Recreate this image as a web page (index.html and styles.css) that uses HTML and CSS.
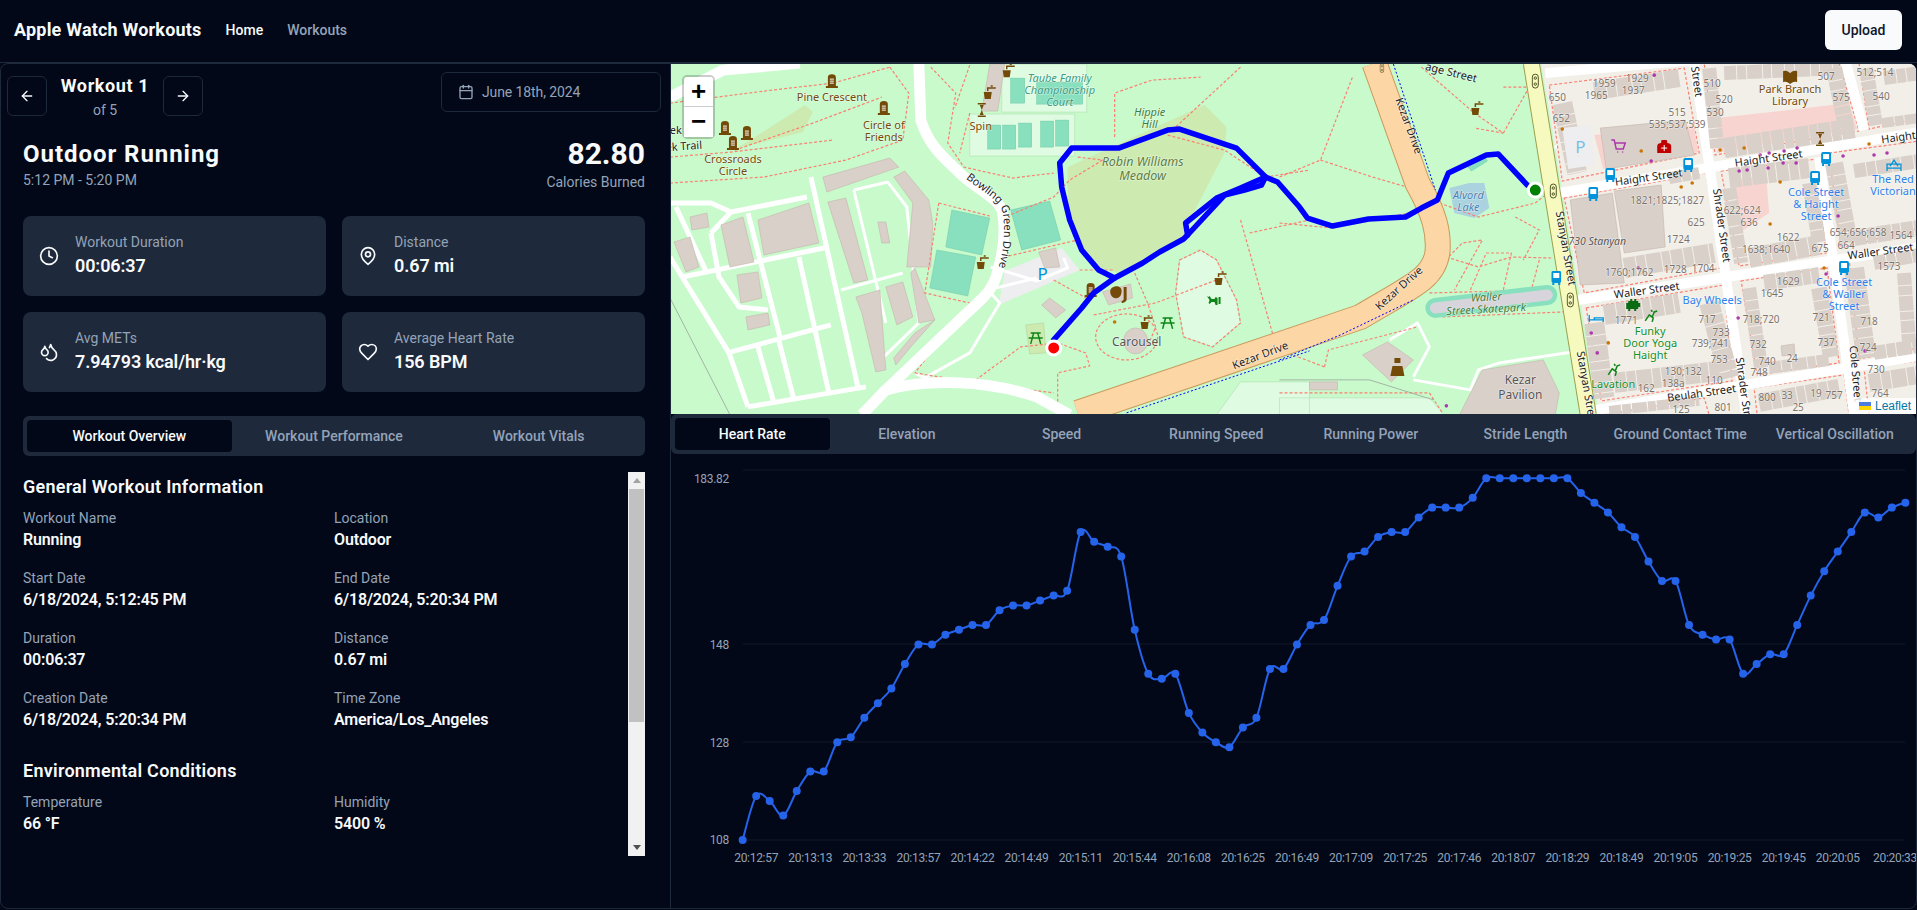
FILE: index.html
```html
<!DOCTYPE html>
<html lang="en">
<head>
    <meta charset="UTF-8">
    <title>Apple Watch Workouts</title>
    <link rel="stylesheet" href="styles.css">
</head>
<body>
    <header class="topbar">
        <div class="brand">Apple Watch Workouts</div>
        <nav class="topnav">
            <a class="active">Home</a>
            <a>Workouts</a>
        </nav>
        <button class="upload">Upload</button>
    </header>

    <div class="panels">
        <section class="left">
            <div class="pager-row">
                <div class="pager">
                    <button class="icon-btn"><svg class="ico" viewBox="0 0 24 24"><path d="m12 19-7-7 7-7"/><path d="M19 12H5"/></svg></button>
                    <div class="pager-title">
                        <div class="pager-name">Workout 1</div>
                        <div class="pager-of">of 5</div>
                    </div>
                    <button class="icon-btn"><svg class="ico" viewBox="0 0 24 24"><path d="M5 12h14"/><path d="m12 5 7 7-7 7"/></svg></button>
                </div>
                <button class="date-btn"><svg class="ico cal" viewBox="0 0 24 24"><rect x="3" y="4" width="18" height="18" rx="2"/><path d="M16 2v4"/><path d="M8 2v4"/><path d="M3 10h18"/></svg>June 18th, 2024</button>
            </div>

            <div class="summary">
                <div>
                    <h1>Outdoor Running</h1>
                    <div class="muted">5:12 PM - 5:20 PM</div>
                </div>
                <div class="calories">
                    <div class="cal-num">82.80</div>
                    <div class="muted">Calories Burned</div>
                </div>
            </div>

            <div class="cards">
                <div class="card">
                    <svg class="ico card-ico" viewBox="0 0 24 24"><circle cx="12" cy="12" r="10"/><polyline points="12 6 12 12 16 14"/></svg>
                    <div><div class="muted">Workout Duration</div><div class="card-val">00:06:37</div></div>
                </div>
                <div class="card">
                    <svg class="ico card-ico" viewBox="0 0 24 24"><path d="M20 10c0 6-8 12-8 12s-8-6-8-12a8 8 0 0 1 16 0Z"/><circle cx="12" cy="10" r="3"/></svg>
                    <div><div class="muted">Distance</div><div class="card-val">0.67 mi</div></div>
                </div>
                <div class="card">
                    <svg class="ico card-ico" viewBox="0 0 24 24"><path d="M7 16.3c2.2 0 4-1.83 4-4.05 0-1.16-.57-2.26-1.71-3.19S7.29 6.75 7 5.3c-.29 1.45-1.14 2.84-2.29 3.76S3 11.1 3 12.25c0 2.22 1.8 4.05 4 4.05z"/><path d="M12.56 6.6A10.97 10.97 0 0 0 14 3.02c.5 2.5 2 4.9 4 6.5s3 3.5 3 5.5a6.98 6.98 0 0 1-11.91 4.97"/></svg>
                    <div><div class="muted">Avg METs</div><div class="card-val">7.94793 kcal/hr·kg</div></div>
                </div>
                <div class="card">
                    <svg class="ico card-ico" viewBox="0 0 24 24"><path d="M19 14c1.49-1.46 3-3.21 3-5.5A5.5 5.5 0 0 0 16.5 3c-1.76 0-3 .5-4.5 2-1.5-1.5-2.74-2-4.5-2A5.5 5.5 0 0 0 2 8.5c0 2.3 1.5 4.05 3 5.5l7 7Z"/></svg>
                    <div><div class="muted">Average Heart Rate</div><div class="card-val">156 BPM</div></div>
                </div>
            </div>

            <div class="tabs tabs-left">
                <div class="tab active">Workout Overview</div>
                <div class="tab">Workout Performance</div>
                <div class="tab">Workout Vitals</div>
            </div>

            <div class="details-wrap">
                <div class="details">
                    <h2>General Workout Information</h2>
                    <div class="info-grid">
                        <div><div class="muted">Workout Name</div><div class="info-val">Running</div></div>
                        <div><div class="muted">Location</div><div class="info-val">Outdoor</div></div>
                        <div><div class="muted">Start Date</div><div class="info-val">6/18/2024, 5:12:45 PM</div></div>
                        <div><div class="muted">End Date</div><div class="info-val">6/18/2024, 5:20:34 PM</div></div>
                        <div><div class="muted">Duration</div><div class="info-val">00:06:37</div></div>
                        <div><div class="muted">Distance</div><div class="info-val">0.67 mi</div></div>
                        <div><div class="muted">Creation Date</div><div class="info-val">6/18/2024, 5:20:34 PM</div></div>
                        <div><div class="muted">Time Zone</div><div class="info-val">America/Los_Angeles</div></div>
                    </div>
                    <h2 class="second">Environmental Conditions</h2>
                    <div class="info-grid">
                        <div><div class="muted">Temperature</div><div class="info-val">66 °F</div></div>
                        <div><div class="muted">Humidity</div><div class="info-val">5400 %</div></div>
                    </div>
                </div>
                <div class="scrollbar">
                    <div class="arrow up"></div>
                    <div class="thumb"></div>
                    <div class="arrow down"></div>
                </div>
            </div>
        </section>

        <section class="right">
            <div class="map">
                <svg class="map-svg" viewBox="1 1 1246 350">
                    <defs>
                        <symbol id="tomb" viewBox="0 0 14 16"><path class="f-brown" d="M3 13V4a4 3 0 0 1 8 0v9zM1 13h12v2H1z"/><path class="s-white" d="M5 6h4M5 8h4M5 10h4"/></symbol>
                        <symbol id="cup" viewBox="0 0 14 16"><path class="f-brown" d="M1 8h8l-1 7H2z"/><path class="s-brown" d="M5 7V4h8M8 2h2"/></symbol>
                        <symbol id="hour" viewBox="0 0 10 16"><path class="f-brown" d="M1 1h8v1.500H1zM1 13.500h8V15H1zM3 3h4L5 8zM5 8l2 5H3z"/></symbol>
                        <symbol id="picnic" viewBox="0 0 16 16"><path class="s-green" d="M3 3h10M6 3 3 14M10 3l3 11M1 8h14"/></symbol>
                        <symbol id="bus" viewBox="0 0 10 14"><rect class="f-bus" x="0" y="0" width="10" height="12" rx="2"/><rect class="f-white" x="2" y="2" width="6" height="5"/><path class="f-bus" d="M1 12h2v2H1zM7 12h2v2H7z"/></symbol>
                        <symbol id="signal" viewBox="0 0 8 16"><rect class="s-dark" x="1" y="1" width="6" height="14" rx="3"/><circle class="s-dark" cx="4" cy="5" r="1.200"/><circle class="s-dark" cx="4" cy="11" r="1.200"/></symbol>
                    </defs>

                    <!-- ground -->
                    <rect class="park" x="0" y="0" width="1250" height="352"/>
                    <path class="urban" d="M872 0H1250V352H930Z"/>
                    <path class="meadow" d="M398 104 535 42 557 64 555 90 527 144 514 177 449 210 429 204 408 177 398 144Z"/>
                    <path class="meadow" d="M69 84 135 42 143 49 133 69 69 85Z"/>
                    <path class="pale" d="M510 197 531 187 547 197 567 237 571 260 543 284 514 274 506 230Z"/>
                    <path class="pale" d="M610 335H760L775 352H610ZM547 352 571 319H640V352Z"/>
                    <path class="pale" d="M300 51H405V93H300ZM332 1H417V49H332Z"/>
                    <path class="parking" d="M335 208 392 185 410 207 329 242Z"/>
                    <path class="meadow-2" d="M356 262 374 260 376 290 360 291Z"/>

                    <!-- pitches -->
                    <g class="pitch">
                        <path d="M282 147 320 155 312 192 276 184Z"/>
                        <path d="M341 147 380 138 391 177 352 187Z"/>
                        <path d="M267 187 306 194 298 233 260 225Z"/>
                        <rect x="318" y="62" width="13" height="24"/>
                        <rect x="333" y="62" width="13" height="24"/>
                        <rect x="349" y="60" width="13" height="24"/>
                        <rect x="371" y="58" width="13" height="26"/>
                        <rect x="386" y="57" width="13" height="26"/>
                        <rect x="341" y="15" width="14" height="25"/>
                        <rect x="367" y="19" width="46" height="22"/>
                        <path d="M798 103 815 93 818 98 802 108Z"/>
                    </g>
                    <path class="water" d="M780 125 800 120 815 120 820 145 805 155 785 150Z"/>

                    <!-- west campus roads and buildings -->
                    <g class="lane">
                        <path d="M0 140H41L61 149 137 134"/>
                        <path d="M6 144 37 210"/>
                        <path d="M12 214 159 184"/>
                        <path d="M61 289 161 262"/>
                        <path d="M78 150 110 274"/>
                        <path d="M141 114 188 324"/>
                        <path d="M129 194 159 330"/>
                        <path d="M41 170 49 214 69 244 98 247"/>
                        <path d="M41 170 61 149"/>
                        <path d="M0 194 59 290 78 344"/>
                        <path d="M88 284 104 340"/>
                        <path d="M108 274 124 337"/>
                        <path d="M78 344 196 324"/>
                    </g>
                    <g class="lane-thin">
                        <path d="M184 127 218 119 237 144 249 260 214 294"/>
                        <path d="M184 127 216 260"/>
                        <path d="M171 227 233 210"/>
                        <path d="M321 204 367 218 398 205 394 195"/>
                        <path d="M322 226 367 215"/>
                        <path d="M321 230 330 240 300 290 255 315 245 310"/>
                        <path d="M903 289 830 300 809 307 801 327 744 317"/>
                        <path d="M720 277 748 260 760 284 744 314"/>
                        <path d="M914 84H885M890 45H915"/>
                    </g>
                    <g class="bld">
                        <path d="M153 114 220 95 229 104 157 129Z"/>
                        <path d="M224 114 235 108 259 137 263 160 261 204 237 204 243 140Z"/>
                        <path d="M158 139 176 135 198 217 184 220Z"/>
                        <path d="M216 224 233 219 243 254 227 262Z"/>
                        <path d="M186 234 210 227 216 307 206 309 192 250Z"/>
                        <path d="M245 205 265 257 249 260 241 210Z"/>
                        <path d="M208 159 216 159 220 180 212 180Z"/>
                        <path d="M224 295 245 270 265 257 241 284 226 302Z"/>
                        <path d="M88 157 139 140 149 180 94 192Z"/>
                        <path d="M51 162 73 154 84 199 60 204Z"/>
                        <path d="M20 154 37 150 39 164 22 167Z"/>
                        <path d="M4 179 20 174 29 204 16 209Z"/>
                        <path d="M67 212 88 209 92 235 71 240Z"/>
                        <path d="M76 254 98 250 100 262 78 267Z"/>
                        <path d="M369 189 386 185 390 204 375 205Z"/>
                        <path d="M380 235 396 247 386 255 372 242Z"/>
                        <path d="M433 229 461 221 463 235 439 242Z"/>
                        <path d="M320 1H335L328 48 312 48Z"/>
                        <ellipse cx="466" cy="278" rx="12" ry="13"/>
                        <path d="M693 292 718 279 744 297 722 319Z"/>
                        <path d="M640 319H668V327H640Z"/>
                        <path d="M813 307 874 297 890 330 886 352 790 352Z"/>
                    </g>

                    <!-- footpaths -->
                    <g class="foot">
                        <path d="M0 40 102 27 163 20 220 4"/>
                        <path d="M220 4 239 30 233 77 176 97 94 114 0 120"/>
                        <path d="M0 94 61 89 163 77"/>
                        <path d="M65 87 143 60 212 34"/>
                        <path d="M261 4 286 30 278 80 294 104 343 115 384 110"/>
                        <path d="M445 74V30L482 17 531 14"/>
                        <path d="M571 4 506 64"/>
                        <path d="M498 72 555 87 596 114"/>
                        <path d="M596 114 640 107"/>
                        <path d="M408 94 433 97 400 117 384 134 335 154"/>
                        <path d="M269 140 320 153M269 140 255 230 300 240 245 310"/>
                        <path d="M339 193 408 177"/>
                        <path d="M410 207H445"/>
                        <path d="M384 217 420 237"/>
                        <path d="M306 317 351 284 388 280 416 290 420 303 388 310V343"/>
                        <path d="M424 252 486 240 547 217"/>
                        <ellipse cx="457" cy="274" rx="31" ry="23"/>
                        <path d="M510 197 531 187 547 197 567 237 571 260 543 284 514 274 506 230Z"/>
                        <path d="M465 210 478 240 486 264 478 284"/>
                        <path d="M580 170 640 157M571 157 604 274"/>
                        <path d="M245 310 306 320 384 330"/>
                        <path d="M651 97 703 114 748 127"/>
                        <path d="M610 114 651 97 683 14"/>
                        <path d="M752 4 805 50 834 70 805 65"/>
                        <path d="M834 70 862 20 858 4"/>
                        <path d="M834 24H862"/>
                        <path d="M770 140 809 154 866 140 886 124"/>
                        <path d="M846 154 870 167 854 197"/>
                        <path d="M769 204 793 180 813 177 785 227"/>
                        <path d="M777 194 809 204 842 194 882 195"/>
                        <path d="M801 227 817 190H842L834 227"/>
                        <path d="M870 197 862 227"/>
                        <path d="M760 230 874 227"/>
                        <path d="M773 254 894 249"/>
                        <path d="M655 304 659 287 748 264"/>
                        <path d="M610 330H760L773 350"/>
                        <path d="M610 160 663 165 740 150"/>
                        <path d="M610 287 655 304"/>
                        <path d="M300 50 290 90M300 2 285 45"/>
                    </g>
                    <g class="thin-grey">
                        <path d="M0 235 60 352"/>
                        <path d="M610 317H700L764 337"/>
                    </g>

                    <!-- main roads -->
                    <path class="road" id="bowling" d="M249 0 251 57C260 85 275 95 290 110 305 125 330 135 333 150 336 170 333 190 329 204 326 220 320 228 314 234L216 327 192 352"/>
                    <path class="road" d="M216 327C260 315 320 318 367 334L400 352"/>
                    <path class="road" d="M0 34 53 7 130 0"/>
                    <path class="kezar-edge" d="M705 0 748 120C765 150 770 170 768 190 764 215 745 222 691 254L408 350"/>
                    <path class="kezar" d="M705 0 748 120C765 150 770 170 768 190 764 215 745 222 691 254L408 350"/>
                    <g class="cycle">
                        <path d="M724 1 766 127"/>
                        <path d="M610 297 671 272 744 237"/>
                        <path d="M457 350 640 288"/>
                    </g>
                    <path class="skate-bg" d="M766 245 878 232"/>
                    <path class="skate" d="M766 245 878 232"/>

                    <!-- blocks -->
                    <g class="block">
                        <path d="M880 22 1015 5 1030 90 893 118Z"/>
                        <path d="M1035 0H1170L1190 68 1046 92Z"/>
                        <path d="M1190 0H1250V55L1200 66Z"/>
                        <path d="M895 135 1037 110 1052 205 915 230Z"/>
                        <path d="M1052 108 1148 96 1157 190 1070 203Z"/>
                        <path d="M1160 90 1250 78V165L1172 185Z"/>
                        <path d="M917 245 1055 222 1063 318 932 338Z"/>
                        <path d="M1072 218 1158 205 1170 300 1088 312Z"/>
                        <path d="M1180 195 1250 185V285L1190 296Z"/>
                        <path d="M935 352 1035 335 1040 352Z"/>
                        <path d="M1085 325 1175 312 1180 352H1088Z"/>
                        <path d="M1195 305 1250 298V352H1200Z"/>
                    </g>
                    <g class="pink">
                        <path d="M1048 55 1180 40 1188 66 1048 90Z"/>
                        <path d="M925 72 1025 62 1029 89 934 106Z"/>
                        <path d="M1065 117 1097 112 1100 150 1070 170Z"/>
                    </g>
                    <g class="st">
                        <path d="M890 130 1250 69"/>
                        <path d="M909 237 1250 184"/>
                        <path d="M927 347 1250 293"/>
                        <path d="M1025 0 1077 352"/>
                        <path d="M1150 94 1185 352"/>
                        <path d="M1177 0 1195 67"/>
                        <path d="M876 10 1025 -3"/>
                    </g>
                    <path class="stanyan-edge" d="M862 0 919 352"/>
                    <path class="stanyan" d="M862 0 919 352"/>

                    <!-- houses -->
                    <g class="rows">
                        <path class="w20" d="M893 40 908 110"/>
                        <path class="w18" d="M925 28 1010 15"/>
                        <path class="w14" d="M1040 5 1048 85"/>
                        <path class="w20" d="M1055 85 1185 65"/>
                        <path class="w14" d="M1055 10 1170 5"/>
                        <path class="w16" d="M1165 5 1178 70"/>
                        <path class="w14" d="M1197 5 1207 62"/>
                        <path class="w14" d="M1215 15 1250 10"/>
                        <path class="w10" d="M1213 60 1250 55"/>
                        <path class="w20" d="M955 205 1045 190"/>
                        <path class="w12" d="M1000 115 1030 110"/>
                        <path class="w20" d="M1060 115 1140 105"/>
                        <path class="w14" d="M1060 125 1072 200"/>
                        <path class="w20" d="M1080 195 1150 182"/>
                        <path class="w14" d="M1140 120 1150 180"/>
                        <path class="w18" d="M1165 100 1180 180"/>
                        <path class="w14" d="M1185 108 1250 98"/>
                        <path class="w16" d="M1185 175 1250 165"/>
                        <path class="w20" d="M925 260 935 335"/>
                        <path class="w20" d="M935 252 1010 240"/>
                        <path class="w20" d="M1040 240 1060 315"/>
                        <path class="w20" d="M945 320 1050 308"/>
                        <path class="w14" d="M1080 225 1092 305"/>
                        <path class="w16" d="M1095 220 1150 212"/>
                        <path class="w16" d="M1150 225 1162 295"/>
                        <path class="w12" d="M1100 305 1160 297"/>
                        <path class="w20" d="M1185 205 1197 295"/>
                        <path class="w14" d="M1205 200 1250 192"/>
                        <path class="w14" d="M1205 290 1250 283"/>
                        <path class="w14" d="M1235 210 1240 280"/>
                        <path class="w10" d="M940 348 1030 338"/>
                        <path class="w18" d="M1090 340 1170 325"/>
                        <path class="w18" d="M1200 320 1250 312"/>
                    </g>
                    <g class="bld">
                        <path d="M931 65 1016 57 1025 92 937 106Z"/>
                        <path d="M901 137 943 130 955 220 911 222Z"/>
                        <path d="M945 128 992 122 996 184 955 190Z"/>
                        <path d="M1112 283 1125 281 1126 292 1113 293Z"/>
                    </g>
                    <path class="parking" d="M893 65 921 62 925 102 899 106Z"/>

                    <!-- poi dots -->
                    <g class="dot-purple">
                        <circle cx="985" cy="12" r="1.800"/><circle cx="1174" cy="93" r="1.800"/><circle cx="1091" cy="92" r="1.800"/><circle cx="1100" cy="90" r="1.800"/><circle cx="1115" cy="88" r="1.800"/><circle cx="1128" cy="85" r="1.800"/><circle cx="1205" cy="92" r="1.800"/><circle cx="1218" cy="90" r="1.800"/><circle cx="1070" cy="108" r="1.800"/><circle cx="1078" cy="107" r="1.800"/><circle cx="1099" cy="105" r="1.800"/><circle cx="1114" cy="100" r="1.800"/><circle cx="1127" cy="100" r="1.800"/><circle cx="982" cy="98" r="1.800"/><circle cx="969" cy="205" r="1.800"/><circle cx="1169" cy="153" r="1.800"/><circle cx="1069" cy="255" r="1.800"/><circle cx="1157" cy="211" r="1.800"/><circle cx="922" cy="270" r="1.800"/><circle cx="928" cy="290" r="1.800"/><circle cx="1196" cy="288" r="1.800"/><circle cx="777" cy="343" r="1.800"/>
                    </g>
                    <g class="dot-orange">
                        <circle cx="893" cy="66" r="1.800"/><circle cx="972" cy="88" r="1.800"/><circle cx="1051" cy="87" r="1.800"/><circle cx="1075" cy="85" r="1.800"/><circle cx="1200" cy="81" r="1.800"/><circle cx="1012" cy="124" r="1.800"/><circle cx="1023" cy="120" r="1.800"/><circle cx="1101" cy="161" r="1.800"/><circle cx="1111" cy="119" r="1.800"/><circle cx="1155" cy="205" r="1.800"/><circle cx="939" cy="280" r="1.800"/><circle cx="445" cy="259" r="1.800"/>
                    </g>

                    <!-- icons -->
                    <use href="#tomb" x="155" y="10" width="14" height="16"/>
                    <use href="#tomb" x="207" y="37" width="14" height="16"/>
                    <use href="#tomb" x="48" y="57" width="14" height="16"/>
                    <use href="#tomb" x="70" y="62" width="14" height="16"/>
                    <use href="#tomb" x="56" y="72" width="14" height="16"/>
                    <use href="#tomb" x="414" y="219" width="14" height="16"/>
                    <use href="#cup" x="332" y="-1" width="14" height="16"/>
                    <use href="#cup" x="313" y="21" width="14" height="16"/>
                    <use href="#cup" x="306" y="191" width="14" height="16"/>
                    <use href="#cup" x="544" y="207" width="14" height="16"/>
                    <use href="#cup" x="470" y="251" width="14" height="16"/>
                    <use href="#cup" x="801" y="37" width="14" height="16"/>
                    <use href="#hour" x="307" y="39" width="10" height="16"/>
                    <use href="#hour" x="1146" y="68" width="10" height="16"/>
                    <use href="#picnic" x="358" y="267" width="16" height="16"/>
                    <use href="#picnic" x="490" y="252" width="16" height="16"/>
                    <use href="#bus" x="936" y="105" width="10" height="14"/>
                    <use href="#bus" x="1014" y="95" width="10" height="14"/>
                    <use href="#bus" x="919" y="124" width="10" height="14"/>
                    <use href="#bus" x="1152" y="89" width="10" height="14"/>
                    <use href="#bus" x="1141" y="108" width="10" height="14"/>
                    <use href="#bus" x="882" y="208" width="10" height="14"/>
                    <use href="#bus" x="1170" y="198" width="10" height="14"/>
                    <use href="#signal" x="862" y="10" width="8" height="16"/>
                    <use href="#signal" x="880" y="120" width="8" height="16"/>
                    <use href="#signal" x="897" y="229" width="8" height="16"/>
                    <use href="#signal" x="710" y="0" width="5" height="10"/>
                    <path class="f-brown" d="M442 225c4-3 10-2 10 3s-3 8-7 7-6-7-3-10zM454 224h3v12c0 3-3 4-5 4v-2c1 0 2-1 2-2z"/>
                    <path class="f-green" d="M537 233l2 1 1-1 2 3h3l1-2 2 1v7h-2l-1-3h-3l-2 2-1-1 1-3-2-3zM549 234h2v7h-2z"/>
                    <path class="s-purple" d="M942 77h3l2 9h7l2-6H946M948 89h1M953 89h1"/>
                    <path class="f-red" d="M988 90v-7c0-2 2-3 4-3v-2c0-1 1-1 2-1h2c1 0 2 0 2 1v2c2 0 4 1 4 3v7z"/>
                    <path class="s-white" d="M995 82v6M992 85h6"/>
                    <path class="f-brown" d="M1114 8c3-1 5 0 7 2 2-2 4-3 7-2v11c-3-1-5 0-7 2-2-2-4-3-7-2z"/>
                    <path class="s-hostel" d="M1218 108v-7h14v7M1218 105h14M1221 103l4-6 4 6"/>
                    <path class="s-hostel" d="M920 252v7M920 257h14v2M934 259v-4h-9v2"/>
                    <path class="f-invader" d="M957 244v-4h2v-2h2v-2h2v2h2v-2h2v2h2v2h2v4h-2v2h-2v2h-2v-2h-4v2h-2v-2h-2z"/>
                    <path class="s-green" d="M976 258l4-6 3 2 2-5 3-1M980 252l4 3-1 4M983 249l-1-2"/>
                    <path class="s-green" d="M939 312l4-6 3 2 2-5 3-1M943 306l4 3-1 4M946 303l-1-2"/>
                    <path class="f-brown" d="M723 303h10l2 10h-14zM725 295h6v5h-6z"/>

                    <!-- labels -->
                    <g class="t-brown">
                        <text x="162" y="38">Pine Crescent</text>
                        <text x="214" y="66">Circle of</text>
                        <text x="214" y="78">Friends</text>
                        <text x="63" y="100">Crossroads</text>
                        <text x="63" y="112">Circle</text>
                        <text x="311" y="67">Spin</text>
                        <text x="1121" y="30">Park Branch</text>
                        <text x="1121" y="42">Library</text>
                    </g>
                    <g class="t-park">
                        <text x="480" y="53">Hippie</text>
                        <text x="480" y="65">Hill</text>
                        <text class="big" x="473" y="103">Robin Williams</text>
                        <text class="big" x="473" y="117">Meadow</text>
                        <text x="817" y="238" transform="rotate(-3 817 238)">Waller</text>
                        <text x="817" y="250" transform="rotate(-3 817 250)">Street Skatepark</text>
                    </g>
                    <g class="t-court">
                        <text x="390" y="19">Taube Family</text>
                        <text x="390" y="31">Championship</text>
                        <text x="390" y="43">Court</text>
                    </g>
                    <g class="t-lake">
                        <text x="799" y="136">Alvord</text>
                        <text x="799" y="148">Lake</text>
                    </g>
                    <g class="t-grey">
                        <text x="467" y="283">Carousel</text>
                        <text x="851" y="321">Kezar</text>
                        <text x="851" y="336">Pavilion</text>
                        <text class="it" x="928" y="182">730 Stanyan</text>
                    </g>
                    <g class="t-road">
                        <text class="start"><textPath href="#bowling" startOffset="132">Bowling Green Drive</textPath></text>
                        <text x="592" y="296" transform="rotate(-21 592 296)">Kezar Drive</text>
                        <text x="736" y="64" transform="rotate(70 736 64)">Kezar Drive</text>
                        <text x="732" y="228" transform="rotate(-42 732 228)">Kezar Drive</text>
                        <text x="781" y="13" transform="rotate(14 781 13)">age Street</text>
                        <text x="893" y="186" transform="rotate(80 893 186)">Stanyan Street</text>
                        <text x="913" y="321" transform="rotate(80 913 321)">Stanyan Stre</text>
                        <text x="980" y="118" transform="rotate(-8 980 118)">Haight Street</text>
                        <text x="1100" y="99" transform="rotate(-8 1100 99)">Haight Street</text>
                        <text x="1230" y="78" transform="rotate(-8 1230 78)">Haight</text>
                        <text x="1049" y="163" transform="rotate(82 1049 163)">Shrader Street</text>
                        <text x="1071" y="327" transform="rotate(82 1071 327)">Shrader Stre</text>
                        <text x="1024" y="19" transform="rotate(82 1024 19)">Street</text>
                        <text x="1183" y="311" transform="rotate(85 1183 311)">Cole Street</text>
                        <text x="978" y="231" transform="rotate(-8 978 231)">Waller Street</text>
                        <text x="1212" y="192" transform="rotate(-8 1212 192)">Waller Street</text>
                        <text x="1033" y="334" transform="rotate(-8 1033 334)">Beulah Street</text>
                        <text x="18" y="71">ek Trail</text>
                        <text x="14" y="87" transform="rotate(-4 14 87)">ek Trail</text>
                    </g>
                    <g class="t-blue">
                        <text x="1147" y="133">Cole Street</text>
                        <text x="1147" y="145">&amp; Haight</text>
                        <text x="1147" y="157">Street</text>
                        <text x="1175" y="223">Cole Street</text>
                        <text x="1175" y="235">&amp; Waller</text>
                        <text x="1175" y="247">Street</text>
                        <text x="1224" y="120">The Red</text>
                        <text x="1224" y="132">Victorian</text>
                        <text x="1043" y="241">Bay Wheels</text>
                    </g>
                    <g class="t-green">
                        <text x="981" y="272">Funky</text>
                        <text x="981" y="284">Door Yoga</text>
                        <text x="981" y="296">Haight</text>
                        <text x="944" y="325">Lavation</text>
                    </g>
                    <text class="t-p" x="373" y="217">P</text>
                    <text class="t-p pale-p" x="911" y="90">P</text>
                    <g class="t-num">
                        <text x="935" y="24">1959</text><text x="968" y="19">1929</text><text x="927" y="36">1965</text><text x="964" y="31">1937</text>
                        <text x="888" y="38">650</text><text x="892" y="59">652</text><text x="1008" y="53">515</text><text x="1008" y="65">535;537;539</text>
                        <text x="1043" y="24">510</text><text x="1055" y="40">520</text><text x="1046" y="53">530</text><text x="1157" y="17">507</text>
                        <text x="1172" y="38">575</text><text x="1206" y="13">512;514</text><text x="1212" y="37">540</text><text x="998" y="141">1821;1825;1827</text>
                        <text x="1027" y="163">625</text><text x="1073" y="151">622;624</text><text x="1080" y="163">636</text><text x="1009" y="180">1724</text>
                        <text x="1119" y="178">1622</text><text x="1097" y="190">1638;1640</text><text x="1151" y="189">675</text><text x="1189" y="173">654;656;658</text>
                        <text x="1232" y="176">1564</text><text x="1177" y="186">664</text><text x="960" y="213">1760;1762</text><text x="1006" y="210">1728</text>
                        <text x="1034" y="209">1704</text><text x="1220" y="207">1573</text><text x="1119" y="222">1629</text><text x="1103" y="234">1645</text>
                        <text x="957" y="261">1771</text><text x="1038" y="260">717</text><text x="1052" y="273">733</text><text x="1041" y="284">739;741</text>
                        <text x="1050" y="300">753</text><text x="1092" y="260">718;720</text><text x="1152" y="258">721</text><text x="1089" y="285">732</text>
                        <text x="1157" y="283">737</text><text x="1098" y="302">740</text><text x="1123" y="299">24</text><text x="1090" y="313">748</text>
                        <text x="1200" y="262">718</text><text x="1199" y="288">724</text><text x="1207" y="310">730</text><text x="1211" y="334">764</text>
                        <text x="1014" y="312">130;132</text><text x="1045" y="321">110</text><text x="1004" y="324">138a</text><text x="977" y="329">162</text>
                        <text x="1165" y="336">757</text><text x="1098" y="338">800</text><text x="1118" y="336">33</text><text x="1147" y="334">19</text>
                        <text x="1129" y="348">25</text><text x="1012" y="350">125</text><text x="1054" y="348">801</text>
                    </g>

                    <!-- track -->
                    <g class="track">
                        <path d="M384 277 412 245 424 230 445 215 473 200 490 189 514 176 518 172 555 132 575 127 592 122 596 114"/>
                        <path d="M596 114 571 125 547 135 516 160 518 172"/>
                        <path d="M445 215 429 207 412 187 400 157 392 124 390 100 402 85 449 85 498 67 510 66 567 85 596 114 608 119 630 144 638 155 663 163 699 156 736 154 752 145 768 137 779 110 817 92 829 91 858 122"/>
                    </g>
                    <circle class="pin-start" cx="384" cy="285" r="7"/>
                    <circle class="pin-end" cx="866" cy="127" r="7"/>
                </svg>
                <div class="zoom-ctl">
                    <div class="zoom-btn zoom-in">+</div>
                    <div class="zoom-btn">−</div>
                </div>
                <div class="attrib"><svg class="flag" viewBox="0 0 12 8"><path class="flag-b" d="M0 0h12v4H0z"/><path class="flag-y" d="M0 4h12v4H0z"/></svg><a>Leaflet</a></div>
            </div>

            <div class="tabs tabs-right">
                <div class="tab active">Heart Rate</div>
                <div class="tab">Elevation</div>
                <div class="tab">Speed</div>
                <div class="tab">Running Speed</div>
                <div class="tab">Running Power</div>
                <div class="tab">Stride Length</div>
                <div class="tab">Ground Contact Time</div>
                <div class="tab">Vertical Oscillation</div>
            </div>

            <div class="chart" id="chart"></div>
        </section>
    </div>

    <script src="chart.js"></script>
</body>
</html>
```

FILE: styles.css
```css
* {
    box-sizing: border-box;
}
html, body {
    height: 100%;
}
body {
    margin: 0;
    background-color: #020817;
    color: #f8fafc;
    font-family: Roboto, "Noto Sans", sans-serif;
    font-size: 14px;
    line-height: 20px;
    overflow: hidden;
}
button {
    font-family: inherit;
    font-size: 14px;
    cursor: pointer;
}
h1, h2 {
    margin: 0;
}
.muted {
    color: #94a3b8;
    font-size: 14px;
    line-height: 20px;
}
.ico {
    fill: none;
    stroke: currentColor;
    stroke-width: 2;
    stroke-linecap: round;
    stroke-linejoin: round;
}

/* top bar */
.topbar {
    display: flex;
    align-items: center;
    height: 63px;
    padding: 0 15px 3px 14px;
    border-bottom: 1px solid #1e293b;
}
.brand {
    font-size: 18px;
    font-weight: 700;
    letter-spacing: 0.2px;
    margin-right: 24px;
}
.topnav {
    display: flex;
    gap: 24px;
    font-weight: 500;
    color: #94a3b8;
}
.topnav .active {
    color: #f8fafc;
}
.upload {
    margin-left: auto;
    width: 77px;
    height: 40px;
    border: none;
    border-radius: 6px;
    background-color: #f8fafc;
    color: #0f172a;
    font-weight: 500;
}

/* panels */
.panels {
    display: flex;
    height: 846px;
    border: 1px solid #1e293b;
    border-radius: 8px;
    overflow: hidden;
}
.left {
    width: 670px;
    flex: none;
    border-right: 1px solid #1e293b;
}
.right {
    flex: 1;
    display: flex;
    flex-direction: column;
    min-width: 0;
}

.pager-row {
    display: flex;
    justify-content: space-between;
    align-items: flex-start;
    padding: 8px 9px 0 6px;
}
.pager {
    display: flex;
    align-items: center;
    height: 48px;
}
.icon-btn {
    width: 40px;
    height: 40px;
    display: flex;
    align-items: center;
    justify-content: center;
    padding: 0;
    border: 1px solid #1e293b;
    border-radius: 6px;
    background: transparent;
    color: #f8fafc;
}
.icon-btn .ico {
    width: 16px;
    height: 16px;
}
.pager-title {
    width: 116px;
    text-align: center;
}
.pager-name {
    font-size: 18px;
    font-weight: 700;
    letter-spacing: 0.6px;
    line-height: 28px;
}
.pager-of {
    color: #94a3b8;
    line-height: 20px;
}
.date-btn {
    width: 220px;
    height: 40px;
    display: flex;
    align-items: center;
    gap: 8px;
    padding: 0 16px;
    border: 1px solid #1e293b;
    border-radius: 6px;
    background: transparent;
    color: #94a3b8;
    letter-spacing: -0.1px;
}
.cal {
    width: 16px;
    height: 16px;
}

.summary {
    display: flex;
    justify-content: space-between;
    align-items: center;
    margin-top: 16px;
    padding: 0 25px 0 22px;
}
h1 {
    font-size: 24px;
    font-weight: 700;
    letter-spacing: 0.95px;
    line-height: 32px;
}
.calories {
    text-align: right;
}
.cal-num {
    font-size: 30px;
    font-weight: 700;
    line-height: 36px;
}

.cards {
    display: grid;
    grid-template-columns: 1fr 1fr;
    gap: 16px;
    margin-top: 24px;
    padding: 0 25px 0 22px;
}
.card {
    display: flex;
    align-items: center;
    gap: 16px;
    height: 80px;
    padding: 0 16px;
    border-radius: 8px;
    background-color: #1e293b;
}
.card-ico {
    width: 20px;
    height: 20px;
    flex: none;
}
.card-val {
    font-size: 18px;
    font-weight: 600;
    letter-spacing: -0.1px;
    line-height: 28px;
}

/* tabs */
.tabs {
    display: grid;
    padding: 4px;
    border-radius: 6px;
    background-color: #1e293b;
    color: #94a3b8;
    font-weight: 500;
}
.tabs-left {
    grid-template-columns: repeat(3, 1fr);
    height: 40px;
    margin: 24px 25px 0 22px;
}
.tabs-right {
    grid-template-columns: repeat(8, 1fr);
    height: 40px;
    flex: none;
}
.tab {
    display: flex;
    align-items: center;
    justify-content: center;
    height: 32px;
    border-radius: 4px;
    white-space: nowrap;
}
.tab.active {
    background-color: #020817;
    color: #f8fafc;
}

/* details */
.details-wrap {
    display: flex;
    height: 384px;
    margin: 16px 25px 0 22px;
}
.details {
    flex: 1;
    overflow: hidden;
}
h2 {
    font-size: 18px;
    font-weight: 600;
    letter-spacing: 0.25px;
    line-height: 28px;
    margin-bottom: 8px;
    padding-top: 1px;
}
h2.second {
    margin-top: 24px;
}
.info-grid {
    display: grid;
    grid-template-columns: 295px 295px;
    column-gap: 16px;
    row-gap: 16px;
    margin-top: -1px;
}
.info-val {
    font-size: 16px;
    font-weight: 600;
    letter-spacing: -0.15px;
    line-height: 24px;
}
.scrollbar {
    width: 17px;
    flex: none;
    display: flex;
    flex-direction: column;
    align-items: center;
    background-color: #f1f1f1;
}
.thumb {
    width: 15px;
    height: 233px;
    background-color: #c1c1c1;
}
.arrow {
    width: 0;
    height: 0;
    border-left: 4px solid transparent;
    border-right: 4px solid transparent;
}
.arrow.up {
    margin: 6px 0 6px;
    border-bottom: 5px solid #a3a3a3;
}
.arrow.down {
    margin-top: auto;
    margin-bottom: 6px;
    border-top: 5px solid #505050;
}

/* map */
.map {
    position: relative;
    height: 350px;
    flex: none;
    overflow: hidden;
}
.map-svg {
    display: block;
    width: 100%;
    height: 100%;
    font-family: "Noto Sans", sans-serif;
}
.zoom-ctl {
    position: absolute;
    left: 11px;
    top: 11px;
    width: 33px;
    border: 2px solid rgba(0,0,0,0.2);
    border-radius: 5px;
    background-clip: padding-box;
}
.zoom-btn {
    height: 30px;
    background-color: #fff;
    color: #000;
    font-family: "Liberation Sans", sans-serif;
    font-size: 26px;
    font-weight: 700;
    line-height: 29px;
    text-align: center;
}
.zoom-in {
    border-bottom: 1px solid #ccc;
    border-radius: 3px 3px 0 0;
}
.attrib {
    position: absolute;
    right: 0;
    bottom: 0;
    display: flex;
    align-items: center;
    gap: 4px;
    height: 16px;
    padding: 0 5px;
    background-color: rgba(255,255,255,0.8);
    font-family: "Liberation Sans", sans-serif;
    font-size: 12px;
    color: #0078a8;
}
.flag {
    width: 12px;
    height: 8px;
}
.flag-b { fill: #4c7be1; }
.flag-y { fill: #ffd500; }

.park { fill: #c8facc; }
.urban { fill: #f2efe9; }
.meadow { fill: #cdebb0; }
.meadow-2 { fill: #cdebb0; stroke: #b5d29c; stroke-width: 0.6; }
.pale { fill: #dffce2; stroke: #aedfb0; stroke-width: 0.6; }
.parking { fill: #eeeef0; }
.pitch path, .pitch rect { fill: #88e0be; stroke: #6fc8a6; stroke-width: 0.5; }
.water { fill: #aad3df; }
.lane path { fill: none; stroke: #fff; stroke-width: 5; stroke-linejoin: round; }
.lane-thin path { fill: none; stroke: #fff; stroke-width: 3; stroke-linejoin: round; }
.bld path, .bld ellipse { fill: #d9d0c9; stroke: #c4b6ab; stroke-width: 0.6; }
.foot path, .foot ellipse { fill: none; stroke: #fa8072; stroke-width: 1.2; stroke-dasharray: 3 2; }
.thin-grey path { fill: none; stroke: #9aa39a; stroke-width: 0.8; }
.road { fill: none; stroke: #fff; stroke-width: 11; stroke-linejoin: round; }
.kezar-edge { fill: none; stroke: #c99a5b; stroke-width: 26; }
.kezar { fill: none; stroke: #fcd6a4; stroke-width: 24; }
.cycle path { fill: none; stroke: #0000ff; stroke-width: 1; stroke-dasharray: 2 2; }
.skate-bg { fill: none; stroke: #88e0be; stroke-width: 20; stroke-linecap: round; }
.skate { fill: none; stroke: #d8d4dc; stroke-width: 11; stroke-linecap: round; }
.block path { fill: #f2efe9; stroke: #fa8072; stroke-width: 1.2; stroke-dasharray: 3 2; }
.pink path { fill: #f8d4d0; }
.st path { fill: none; stroke: #fff; stroke-width: 10; }
.stanyan-edge { fill: none; stroke: #9aa04e; stroke-width: 17; }
.stanyan { fill: none; stroke: #f7fabf; stroke-width: 15; }
.rows path { fill: none; stroke: #d9d0c9; stroke-dasharray: 12 1 9 1 15 1 8 1; }
.w10 { stroke-width: 10; }
.w12 { stroke-width: 12; }
.w14 { stroke-width: 14; }
.w16 { stroke-width: 16; }
.w18 { stroke-width: 18; }
.w20 { stroke-width: 20; }
.dot-purple circle { fill: #ac39ac; }
.dot-orange circle { fill: #c77400; }

.f-brown { fill: #734a08; }
.s-brown { fill: none; stroke: #734a08; stroke-width: 1.5; }
.s-white { fill: none; stroke: #fff; stroke-width: 1; }
.f-white { fill: #fff; }
.s-green { fill: none; stroke: #0e8517; stroke-width: 1.5; }
.f-green { fill: #0e8517; }
.f-bus { fill: #0092da; }
.s-dark { fill: none; stroke: #4f5324; stroke-width: 1; }
.s-purple { fill: none; stroke: #ac39ac; stroke-width: 1.5; }
.f-red { fill: #bf0000; }
.s-hostel { fill: none; stroke: #0092da; stroke-width: 1.3; }
.f-invader { fill: #0a6b12; }

.t-brown text, .t-park text, .t-court text, .t-lake text, .t-grey text, .t-road text, .t-blue text, .t-green text, .t-num text {
    text-anchor: middle;
    font-size: 11px;
    paint-order: stroke;
    stroke: rgba(255,255,255,0.55);
    stroke-width: 1.2px;
}
.t-brown text { fill: #734a08; }
.t-park text { fill: #3f7d3a; font-style: italic; }
.t-park .big { font-size: 12.5px; fill: #5b7d3f; }
.t-court text { fill: #3c9c7f; font-style: italic; }
.t-lake text { fill: #4a7fb0; font-style: italic; }
.t-grey text { fill: #555; font-size: 12px; }
.t-grey .it { font-style: italic; font-size: 10.5px; }
.t-road text { fill: #222; }
.t-road .start { text-anchor: start; }
.t-blue text { fill: #2f80ed; }
.t-green text { fill: #14902a; }
.t-num text { fill: #7c736c; font-size: 10px; }
.t-p { fill: #0092da; font-size: 17px; text-anchor: middle; }
.pale-p { opacity: 0.5; }

.track path { fill: none; stroke: #0000ff; stroke-width: 5.5; stroke-linejoin: round; stroke-linecap: round; }
.pin-start { fill: #ff0000; stroke: #fff; stroke-width: 3; }
.pin-end { fill: #008000; stroke: #fff; stroke-width: 3; }

/* chart */
.chart {
    flex: 1;
    min-height: 0;
}
.chart svg {
    display: block;
    width: 100%;
    height: 100%;
}
.grid-line {
    stroke: #10182a;
    stroke-width: 1;
}
.axis-label {
    fill: #94a3b8;
    font-size: 12px;
    letter-spacing: -0.3px;
}
.hr-line {
    fill: none;
    stroke: #2563eb;
    stroke-width: 2;
}
.hr-dot {
    fill: #2563eb;
}
```

FILE: chart.js
```js
// heart rate samples for the selected workout
const bpm = [108,117,116,113,118,122,122,128,129,133,136,139,144,148,148,150,151,152,152,155,156,156,157,158,159,
    171,169,168,166,151,142,141,142,134,130,128,127,131,133,143,143,148,152,153,160,166,167,170,171,171,174,176,176,176,178,
    182,182,182,182,182,182,182,179,177,175,172,170,165,161,161,152,150,149,149,142,144,146,146,152,158,163,167,171,175,174,176,177];

const ticks = {1:'20:12:57',5:'20:13:13',9:'20:13:33',13:'20:13:57',17:'20:14:22',21:'20:14:49',25:'20:15:11',29:'20:15:44',
    33:'20:16:08',37:'20:16:25',41:'20:16:49',45:'20:17:09',49:'20:17:25',53:'20:17:46',57:'20:18:07',61:'20:18:29',
    65:'20:18:49',69:'20:19:05',73:'20:19:25',77:'20:19:45',81:'20:20:05'};

const chart = document.getElementById('chart');
const W = chart.clientWidth, H = chart.clientHeight;

const xAt = i => 71.65 + 13.52 * i;
const yAt = v => 386 - (v - 108) * 4.888;

let out = `<svg viewBox="0 0 ${W} ${H}">`;

[[16, '183.82', 29], [190, '148', 195], [288, '128', 293], [386, '108', 390]].forEach(([y, label, ty]) => {
    out += `<line class="grid-line" x1="72" x2="1234" y1="${y}" y2="${y}"/>`;
    out += `<text class="axis-label" x="58" y="${ty}" text-anchor="end">${label}</text>`;
});

Object.keys(ticks).forEach(i => {
    out += `<text class="axis-label" x="${xAt(+i)}" y="408" text-anchor="middle">${ticks[i]}</text>`;
});
out += `<text class="axis-label" x="1202" y="408">20:20:33</text>`;

// catmull-rom through the samples
const pts = bpm.map((v, i) => [xAt(i), yAt(v)]);
let d = `M${pts[0][0]} ${pts[0][1]}`;
for (let i = 0; i < pts.length - 1; i++) {
    const p0 = pts[i - 1] || pts[i], p1 = pts[i], p2 = pts[i + 1], p3 = pts[i + 2] || p2;
    const c1x = p1[0] + (p2[0] - p0[0]) / 6, c1y = p1[1] + (p2[1] - p0[1]) / 6;
    const c2x = p2[0] - (p3[0] - p1[0]) / 6, c2y = p2[1] - (p3[1] - p1[1]) / 6;
    d += `C${c1x.toFixed(2)} ${c1y.toFixed(2)} ${c2x.toFixed(2)} ${c2y.toFixed(2)} ${p2[0].toFixed(2)} ${p2[1].toFixed(2)}`;
}
out += `<path class="hr-line" d="${d}"/>`;
pts.forEach(p => {
    out += `<circle class="hr-dot" cx="${p[0].toFixed(2)}" cy="${p[1].toFixed(2)}" r="4"/>`;
});

chart.innerHTML = out + '</svg>';
```
